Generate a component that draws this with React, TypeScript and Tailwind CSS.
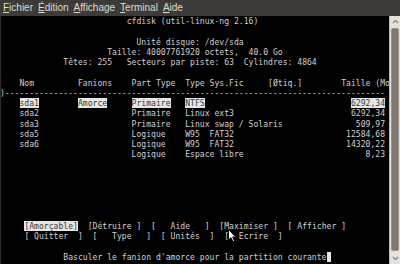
type Seg = { t: string; hl?: boolean; cur?: boolean };
type Item = [number, string, boolean?];

// build one terminal row from [column, text, highlighted] items
function row(items: Item[]): Seg[] {
  const segs: Seg[] = [];
  let col = 0;
  for (const [c, t, hl] of items) {
    if (c > col) segs.push({ t: ' '.repeat(c - col) });
    segs.push({ t, hl });
    col = c + t.length;
  }
  return segs;
}

const right = (end: number, t: string, hl?: boolean): Item => [end - t.length + 1, t, hl];

const lines: Seg[][] = [
  row([[26, 'cfdisk (util-linux-ng 2.16)']]),
  [],
  row([[28, 'Unité disque: /dev/sda']]),
  row([[22, 'Taille: 40007761920 octets,  40.0 Go']]),
  row([[13, 'Têtes: 255   Secteurs par piste: 63  Cylindres: 4864']]),
  [],
  row([
    [4, 'Nom'],
    [16, 'Fanions'],
    [27, 'Part Type'],
    [38, 'Type Sys.Fic'],
    [55, '[Øtiq.]'],
    [70, 'Taille (Mo'],
  ]),
  row([[0, ')' + '-'.repeat(78)]]),
  row([[4, 'sda1', true], [16, 'Amorce', true], [27, 'Primaire', true], [38, 'NTFS', true], right(78, '6292,34', true)]),
  row([[4, 'sda2'], [27, 'Primaire'], [38, 'Linux ext3'], right(78, '6292,34')]),
  row([[4, 'sda3'], [27, 'Primaire'], [38, 'Linux swap / Solaris'], right(78, '509,97')]),
  row([[4, 'sda5'], [27, 'Logique'], [38, 'W95  FAT32'], right(78, '12584,68')]),
  row([[4, 'sda6'], [27, 'Logique'], [38, 'W95  FAT32'], right(78, '14320,22')]),
  row([[27, 'Logique'], [38, 'Espace libre'], right(78, '8,23')]),
  [],
  [],
  [],
  [],
  [],
  [],
  row([
    [5, '[Amorçable]', true],
    [18, '[Détruire ]'],
    [31, '[   Aide   ]'],
    [45, '[Maximiser ]'],
    [59, '[ Afficher ]'],
  ]),
  row([
    [5, '[ Quitter  ]'],
    [19, '[   Type   ]'],
    [33, '[ Unités  ]'],
    [46, '[  Ecrire  ]'],
  ]),
  [],
  [...row([[13, "Basculer le fanion d'amorce pour la partition courante"]]), { t: ' ', cur: true }],
];

const menus = ['Fichier', 'Édition', 'Affichage', 'Terminal', 'Aide'];

export default function App() {
  return (
    <div className="w-[400px] h-[264px] flex flex-col bg-black overflow-hidden">
      {/* menu bar */}
      <div className="h-[16px] shrink-0 bg-[#3c3b37] flex items-center gap-[5px] pl-[3px] text-[10px] text-[#dfdbd2] font-['Liberation_Sans',sans-serif]">
        {menus.map((m) => (
          <span key={m} className="leading-none">
            <span className="underline underline-offset-1">{m[0]}</span>
            {m.slice(1)}
          </span>
        ))}
      </div>

      <div className="flex flex-1 min-h-0">
        {/* terminal */}
        <div className="relative flex-1 overflow-hidden shadow-[inset_1px_0_0_#2c2c2c] font-['DejaVu_Sans_Mono',monospace] text-[8.1px] text-[#d0d0d0]">
          {lines.map((segs, i) => (
            <div key={i} className="h-[10.25px] leading-[10.25px] whitespace-pre">
              {segs.map((s, j) =>
                s.cur ? (
                  <span key={j} className="bg-[#e6e6e6]">{s.t}</span>
                ) : s.hl ? (
                  <span key={j} className="bg-[#e6e6e6] text-[#3a3a3a]">{s.t}</span>
                ) : (
                  <span key={j}>{s.t}</span>
                )
              )}
            </div>
          ))}

          {/* mouse pointer */}
          <svg className="absolute left-[228px] top-[213px]" width="9" height="14" viewBox="0 0 9 14">
            <path d="M0.5 0.5 L0.5 11 L3 8.7 L5 12.8 L6.6 12 L4.7 8 L7.8 8 Z" fill="#ffffff" stroke="#000000" strokeWidth="1" strokeLinejoin="round" />
          </svg>
        </div>

        {/* scrollbar */}
        <div className="w-[11px] shrink-0 bg-[#e4e2de] border-l border-[#bdbab5] flex flex-col items-center">
          <svg className="mt-[3px]" width="7" height="5" viewBox="0 0 7 5">
            <path d="M1 4 L3.5 1.3 L6 4" fill="none" stroke="#8a8782" strokeWidth="1.2" />
          </svg>
          <div className="mt-[4px] flex-1 w-[8px] rounded-[2px] bg-[#7e7670] border border-[#9a928b]" />
          <svg className="mt-[5px] mb-[3px]" width="7" height="5" viewBox="0 0 7 5">
            <path d="M1 1 L3.5 3.7 L6 1" fill="none" stroke="#8a8782" strokeWidth="1.2" />
          </svg>
        </div>
      </div>
    </div>
  );
}
